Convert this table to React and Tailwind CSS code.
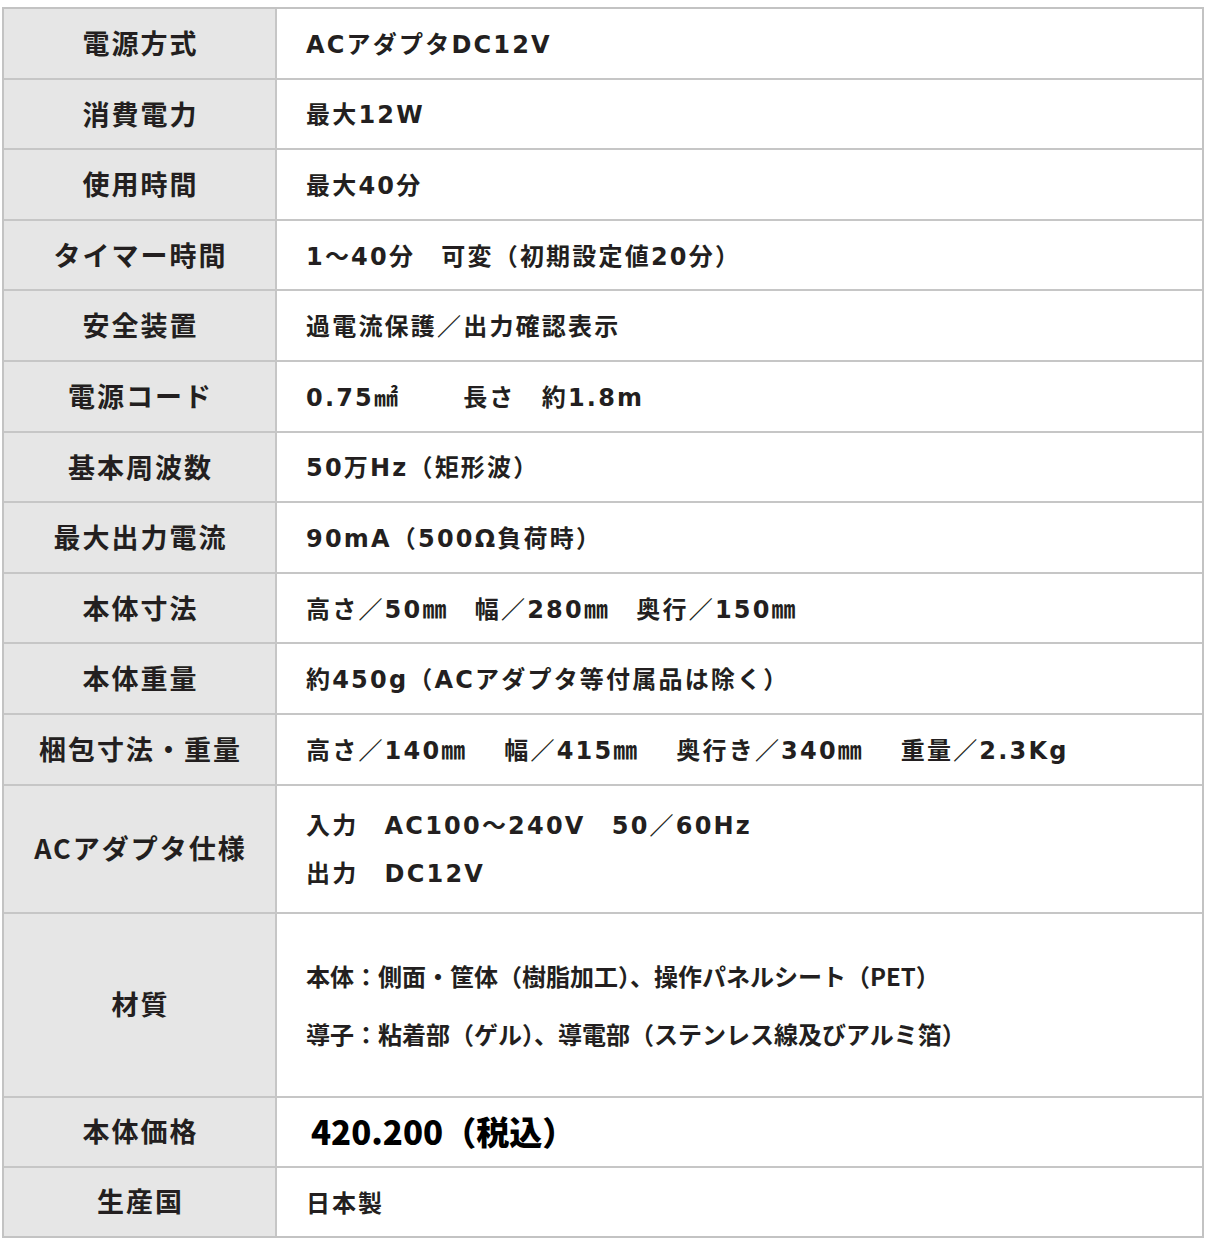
const rows = [
  { label: '電源方式', lines: ['ACアダプタDC12V'] },
  { label: '消費電力', lines: ['最大12W'] },
  { label: '使用時間', lines: ['最大40分'] },
  { label: 'タイマー時間', lines: ['1〜40分　可変（初期設定値20分）'] },
  { label: '安全装置', lines: ['過電流保護／出力確認表示'] },
  { label: '電源コード', lines: ['0.75㎟　　 長さ　約1.8m'] },
  { label: '基本周波数', lines: ['50万Hz（矩形波）'] },
  { label: '最大出力電流', lines: ['90mA（500Ω負荷時）'] },
  { label: '本体寸法', lines: ['高さ／50㎜　幅／280㎜　奥行／150㎜'] },
  { label: '本体重量', lines: ['約450g（ACアダプタ等付属品は除く）'] },
  { label: '梱包寸法・重量', lines: ['高さ／140㎜　 幅／415㎜　 奥行き／340㎜　 重量／2.3Kg'] },
];

const font = { fontFamily: '"Noto Sans CJK JP", "Noto Sans", sans-serif' };
// wider latin digits, as in the spec sheet
const valueFont = { fontFamily: '"DejaVu Sans", "Noto Sans CJK JP", sans-serif' };

/* ── one table row ───────────────────────────────────────────────────── */

function Row({ label, children, height, last }) {
  return (
    <div className={`flex ${last ? '' : 'border-b-2 border-[#c6c6c6]'}`} style={{ height }}>
      <div className="flex w-[273px] shrink-0 items-center justify-center border-r-2 border-[#c6c6c6] bg-[#e6e6e6] pl-[2px] text-[27px] font-bold tracking-[2px] text-[#231f20]">
        {label}
      </div>
      <div className="flex flex-1 flex-col justify-center bg-white pl-[29px]">
        {children}
      </div>
    </div>
  );
}

export default function App() {
  return (
    <div className="min-h-[1249px] bg-white pt-[7px] pl-[2px]" style={font}>
      <div className="w-[1202px] border-2 border-[#c3c3c3]">
        {rows.map((r) => (
          <Row key={r.label} label={r.label} height={70.6}>
            <p className="whitespace-pre pt-[3px] text-[24px] font-bold tracking-[2.2px] text-[#231f20]" style={valueFont}>
              {r.lines[0]}
            </p>
          </Row>
        ))}

        <Row label="ACアダプタ仕様" height={128}>
          <div className="space-y-[12px] pt-[3px] text-[24px] font-bold tracking-[2.2px] text-[#231f20]" style={valueFont}>
            <p className="whitespace-pre">入力　AC100〜240V　50／60Hz</p>
            <p className="whitespace-pre">出力　DC12V</p>
          </div>
        </Row>

        <Row label="材質" height={184}>
          <div className="space-y-[22px] text-[24px] font-bold text-[#231f20]">
            <p>本体：側面・筐体（樹脂加工）、操作パネルシート（PET）</p>
            <p>導子：粘着部（ゲル）、導電部（ステンレス線及びアルミ箔）</p>
          </div>
        </Row>

        <Row label="本体価格" height={70}>
          <p className="pl-[5px] text-[33px] font-black text-black">420.200（税込）</p>
        </Row>

        <Row label="生産国" height={68} last>
          <p className="text-[24px] font-bold tracking-[2px] text-[#231f20]">日本製</p>
        </Row>
      </div>
    </div>
  );
}
